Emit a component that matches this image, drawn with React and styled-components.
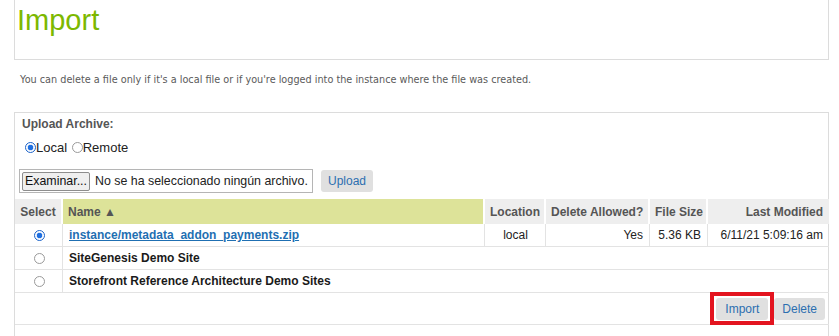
import React from 'react';
import styled, { createGlobalStyle } from 'styled-components';

const Global = createGlobalStyle`
  body {
    margin: 0;
    background: #fff;
    font-family: "Liberation Sans", Arial, sans-serif;
    color: #222;
  }
`;

const rows = [
  { id: 'zip', name: 'instance/metadata_addon_payments.zip', link: true, location: 'local', allowed: 'Yes', size: '5.36 KB', modified: '6/11/21 5:09:16 am' },
  { id: 'sg', name: 'SiteGenesis Demo Site' },
  { id: 'sfra', name: 'Storefront Reference Architecture Demo Sites' },
];

export default function App() {
  return (
    <Page>
      <Global />
      <TitleBox>
        <Title>Import</Title>
      </TitleBox>
      <Note>You can delete a file only if it's a local file or if you're logged into the instance where the file was created.</Note>
      <Panel>
        <Upload>
          <SectionTitle>Upload Archive:</SectionTitle>
          <RadioRow>
            <label><Radio name="src" defaultChecked $left={3} />Local</label>{' '}
            <label><Radio name="src" $left={1} />Remote</label>
          </RadioRow>
          <FileRow>
            <FileBox>
              <Browse type="button">Examinar...</Browse>
              <FileName>No se ha seleccionado ningún archivo.</FileName>
            </FileBox>
            <Button type="button" $pad={7}>Upload</Button>
          </FileRow>
        </Upload>
        <Table>
          <colgroup>
            <col style={{ width: 48 }} />
            <col style={{ width: 422 }} />
            <col style={{ width: 61 }} />
            <col style={{ width: 104 }} />
            <col style={{ width: 58 }} />
            <col style={{ width: 121 }} />
          </colgroup>
          <thead>
            <tr>
              <Th $align="center">Select</Th>
              <Th $sorted>Name ▲</Th>
              <Th $align="center">Location</Th>
              <Th $align="right">Delete Allowed?</Th>
              <Th $align="right">File Size</Th>
              <Th $align="right" $last>Last Modified</Th>
            </tr>
          </thead>
          <tbody>
            {rows.map((r, i) => (
              <tr key={r.id}>
                <Td $align="center" $sep><Radio name="archive" defaultChecked={i === 0} /></Td>
                {r.link ? (
                  <>
                    <Td $sep><FileLink href="#">{r.name}</FileLink></Td>
                    <Td $align="center" $sep>{r.location}</Td>
                    <Td $align="right" $sep>{r.allowed}</Td>
                    <Td $align="right" $sep>{r.size}</Td>
                    <Td $align="right">{r.modified}</Td>
                  </>
                ) : (
                  <Td colSpan={5}><SiteName>{r.name}</SiteName></Td>
                )}
              </tr>
            ))}
            <tr>
              <Actions colSpan={6}>
                <Highlight><Button type="button" $pad={9}>Import</Button></Highlight>
                <Button type="button" $pad={8}>Delete</Button>
              </Actions>
            </tr>
          </tbody>
        </Table>
        <Spacer />
      </Panel>
    </Page>
  );
}

const Page = styled.div`
  padding: 0 10px 0 14px;
`;

const TitleBox = styled.div`
  box-sizing: border-box;
  height: 60px;
  border: 1px solid #dcdcdc;
  border-top: none;
  padding: 3px 2px 0;
`;

const Title = styled.h1`
  margin: 0;
  font-weight: normal;
  font-size: 29px;
  line-height: 34px;
  color: #7cb800;
`;

const Note = styled.p`
  margin: 14px 0 26px 6px;
  font-family: "DejaVu Sans", Verdana, sans-serif;
  font-size: 9.7px;
  line-height: 12px;
  color: #5a5a5a;
`;

const Panel = styled.div`
  border: 1px solid #dcdcdc;
  border-bottom: none;
`;

const Upload = styled.div`
  padding: 4px 7px 6px 4px;
`;

const SectionTitle = styled.div`
  padding-left: 3px;
  font-size: 12px;
  line-height: 14px;
  font-weight: bold;
  color: #555;
`;

const RadioRow = styled.div`
  margin-top: 9px;
  padding-left: 3px;
  font-size: 13px;
  line-height: 16px;
  color: #222;
`;

const Radio = styled.input.attrs({ type: 'radio' })`
  appearance: none;
  box-sizing: border-box;
  width: 11px;
  height: 11px;
  margin: 0 0 0 ${(p) => p.$left || 0}px;
  vertical-align: -1px;
  border: 1px solid #9a9a9a;
  border-radius: 50%;
  background: #fff;
  &:checked {
    border-color: #1a62c9;
    background: radial-gradient(circle, #1f6fe0 0 2.6px, #dbe8fb 3px 3.4px, #fff 3.6px);
  }
`;

const FileRow = styled.div`
  display: flex;
  align-items: center;
  gap: 8px;
  margin-top: 13px;
`;

const FileBox = styled.div`
  box-sizing: border-box;
  display: flex;
  align-items: center;
  width: 294px;
  height: 24px;
  padding: 0 2px;
  border: 1px solid #b5b5b5;
  font-size: 12.4px;
  overflow: hidden;
`;

const Browse = styled.button`
  height: 19px;
  padding: 0 2px;
  border: 1px solid #8d8d8d;
  border-radius: 2px;
  background: #efefef;
  font: 12.4px "Liberation Sans", Arial, sans-serif;
  color: #111;
`;

const FileName = styled.span`
  margin-left: 5px;
  white-space: nowrap;
  color: #222;
`;

const Button = styled.button`
  height: 22px;
  padding: 0 ${(p) => p.$pad}px;
  border: none;
  border-radius: 3px;
  background: #e0e0e0;
  color: #2c6fb0;
  font: 12px "Liberation Sans", Arial, sans-serif;
`;

const Table = styled.table`
  width: 100%;
  table-layout: fixed;
  border-collapse: separate;
  border-spacing: 0;
  font-size: 12px;
`;

const Th = styled.th`
  box-sizing: border-box;
  height: 25px;
  padding: 0 ${(p) => (p.$align === 'right' ? 6 : 5)}px 0 5px;
  text-align: ${(p) => p.$align || 'left'};
  white-space: nowrap;
  font-weight: bold;
  color: #555;
  background: ${(p) => (p.$sorted ? '#dde399' : '#eeeeee')};
  border-right: ${(p) => (p.$last ? 'none' : '2px solid #fff')};
`;

const Td = styled.td`
  box-sizing: border-box;
  height: 23px;
  padding: 0 ${(p) => (p.$align === 'right' ? 6 : 5)}px 0 6px;
  text-align: ${(p) => p.$align || 'left'};
  white-space: nowrap;
  color: #222;
  border-bottom: 1px solid #e3e3e3;
  border-right: ${(p) => (p.$sep ? '1px solid #e3e3e3' : 'none')};
  & > input { vertical-align: -2px; }
`;

const FileLink = styled.a`
  font-weight: bold;
  color: #1f6fb2;
  text-decoration: underline;
`;

const SiteName = styled.span`
  font-weight: bold;
  color: #1a1a1a;
`;

const Actions = styled.td`
  height: 31px;
  padding: 0 4px 0 0;
  text-align: right;
  border-bottom: 1px solid #e3e3e3;
  & > * { vertical-align: middle; }
  & > button { margin-left: 6px; }
`;

const Highlight = styled.span`
  position: relative;
  display: inline-block;
  &::after {
    content: '';
    position: absolute;
    inset: -6px -6px -5px -6px;
    border: 4px solid #e3141f;
    pointer-events: none;
  }
`;

const Spacer = styled.div`
  height: 30px;
`;
